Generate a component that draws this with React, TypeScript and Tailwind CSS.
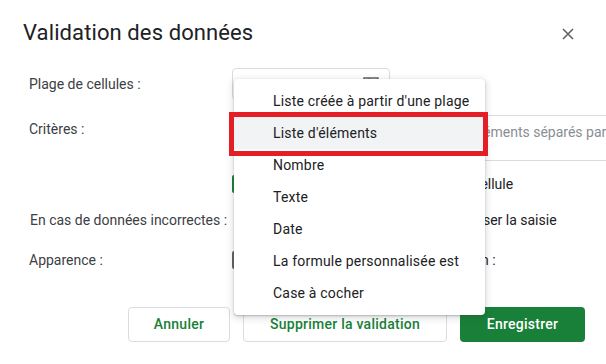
import React from "react";

const items = [
  "Liste créée à partir d'une plage",
  "Liste d'éléments",
  "Nombre",
  "Texte",
  "Date",
  "La formule personnalisée est",
  "Case à cocher",
];

export default function App() {
  return (
    <div
      className="relative w-[606px] h-[364px] overflow-hidden bg-white text-[14px] text-[#3c4043]"
      style={{ fontFamily: "Roboto, 'Liberation Sans', sans-serif" }}
    >
      {/* Header */}
      <div className="flex items-center justify-between pl-[23px] pr-[32px] pt-[18px] h-[48px]">
        <div className="text-[22px] leading-[28px] text-[#202124] tracking-[0.1px]">Validation des données</div>
        <svg width="12" height="12" viewBox="0 0 12 12" className="mt-[2px]">
          <path d="M1 1 L11 11 M11 1 L1 11" stroke="#5f6368" strokeWidth="1.6" />
        </svg>
      </div>

      {/* Rows */}
      <div className="mt-[20px] grid grid-cols-[232px_1fr]">
        {/* Row 1 */}
        <div className="pl-[29px] h-[32px] flex items-center">Plage de cellules :</div>
        <div className="h-[32px]">
          <div className="w-[158px] h-[32px] border border-[#dadce0] rounded-[4px] flex items-center justify-end pr-[10px]">
            <svg width="16" height="14" viewBox="0 0 16 14">
              <rect x="1" y="1" width="14" height="12" fill="none" stroke="#5f6368" strokeWidth="1.5" />
              <path d="M1 5 H15 M1 9 H15 M6 1 V13" stroke="#5f6368" strokeWidth="1.5" />
            </svg>
          </div>
        </div>

        {/* Row 2 */}
        <div className="pl-[29px] mt-[15px] h-[46px] pt-[4px]">Critères :</div>
        <div className="mt-[15px] h-[46px] flex">
          <div className="w-[158px] h-[32px] border border-[#dadce0] rounded-[4px]" />
          <div className="ml-[12px] w-[260px] h-[46px] border-t border-b border-[#dadce0] pt-[6px] pl-[6px] text-[#8a8e93] whitespace-nowrap">
            Saisir des éléments séparés par des virgules
          </div>
        </div>

        {/* Row 3 */}
        <div className="mt-[14px] h-[18px]" />
        <div className="mt-[14px] h-[18px] flex items-center whitespace-nowrap">
          <div className="w-[18px] h-[18px] rounded-[2px] bg-[#188038]" />
          <span className="ml-[9px] text-[#202124]">Afficher la liste déroulante dans la cellule</span>
        </div>

        {/* Row 4 */}
        <div className="pl-[30px] mt-[18px] h-[18px] flex items-center whitespace-nowrap">En cas de données incorrectes :</div>
        <div className="mt-[18px] h-[18px] flex items-center whitespace-nowrap text-[#202124]">
          <div className="ml-[5px] w-[18px] h-[18px] rounded-full border-2 border-[#5f6368]" />
          <span className="ml-[8px]">Afficher un avertissement</span>
          <div className="ml-[6px] w-[18px] h-[18px] rounded-full border-2 border-[#188038]" />
          <span className="ml-[8px]">Refuser la saisie</span>
        </div>

        {/* Row 5 */}
        <div className="pl-[29px] mt-[22px] h-[18px] flex items-center">Apparence :</div>
        <div className="mt-[22px] h-[18px] flex items-center whitespace-nowrap text-[#202124]">
          <div className="w-[18px] h-[18px] rounded-[2px] border-2 border-[#5f6368]" />
          <span className="ml-[8px]">Afficher un texte d'aide à la validation :</span>
        </div>
      </div>

      {/* Buttons */}
      <div className="mt-[38px] flex pl-[128px] gap-[13px]">
        <button className="w-[102px] h-[35px] rounded-[4px] border border-[#dadce0] text-[#188038] font-medium text-[14px] tracking-[0.25px]">
          Annuler
        </button>
        <button className="w-[204px] h-[35px] rounded-[4px] border border-[#dadce0] text-[#188038] font-medium text-[14px] tracking-[0.25px]">
          Supprimer la validation
        </button>
        <button className="w-[125px] h-[35px] rounded-[4px] bg-[#188038] text-white font-medium text-[14px] tracking-[0.25px]">
          Enregistrer
        </button>
      </div>

      {/* Dropdown menu */}
      <div className="absolute left-[234px] top-[79px] w-[251px] py-[6px] bg-white rounded-[4px] shadow-[0_2px_6px_2px_rgba(60,64,67,0.15),0_1px_2px_rgba(60,64,67,0.3)]">
        {items.map((t, i) => (
          <div
            key={t}
            className={
              i === 1
                ? "h-[32px] flex items-center pl-[39px] text-[#202124] tracking-[0.2px] bg-[#f1f3f4]"
                : "h-[32px] flex items-center pl-[39px] text-[#202124] tracking-[0.2px]"
            }
          >
            {t}
          </div>
        ))}
      </div>

      {/* Red highlight box */}
      <div className="absolute left-[229px] top-[112px] w-[259px] h-[44px] border-[5px] border-[#e31e24]" />
    </div>
  );
}
